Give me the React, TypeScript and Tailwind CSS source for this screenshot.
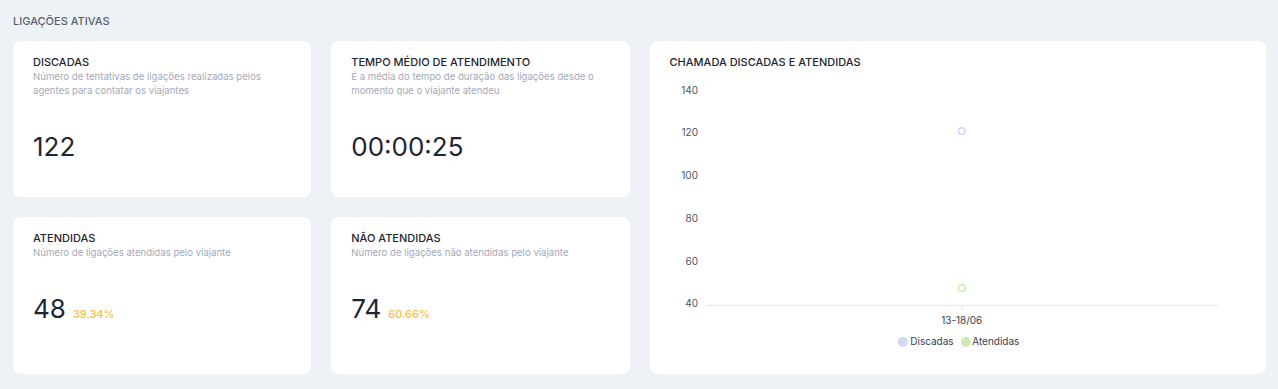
import React from 'react';

const FONT = { fontFamily: 'Inter, "Noto Sans", sans-serif' };

type StatProps = {
  title: string;
  description: string;
  value: string;
  percent?: string;
};

function StatCard({ title, description, value, percent }: StatProps) {
  return (
    <div className="bg-white rounded-lg px-5 pt-[13px]">
      <h4 className="text-[11px] leading-4 font-medium text-[#1e2433]">{title}</h4>
      <p className="text-[9.6px] leading-[14px] text-[#a3a9b8]">{description}</p>
      <div className="mt-8 flex items-baseline gap-[7px]">
        <span className="text-[26px] leading-[34px] text-[#1e2433]">{value}</span>
        {percent && <span className="text-[11px] font-medium text-[#f8bd45]">{percent}</span>}
      </div>
    </div>
  );
}

function Chart() {
  const ticks = [140, 120, 100, 80, 60, 40];
  const y = (v: number) => 234 - (v - 40) * 2.14;
  return (
    <svg className="w-full h-[290px]" viewBox="0 0 617 290" style={FONT}>
      {ticks.map((t) => (
        <text key={t} x={48} y={y(t) + 3.5} textAnchor="end" fontSize="10" fill="#4b5563">
          {t}
        </text>
      ))}
      <line x1={56} x2={568} y1={235.5} y2={235.5} stroke="#e5e7eb" strokeWidth="1" />
      <line x1={312.5} x2={312.5} y1={236} y2={241} stroke="#e5e7eb" strokeWidth="1" />
      <text x={312} y={254.5} textAnchor="middle" fontSize="10" fill="#374151">
        13-18/06
      </text>
      <circle cx={312} cy={61} r={3.3} fill="white" stroke="#cfd4f2" strokeWidth="1.5" />
      <circle cx={312} cy={218} r={3.3} fill="white" stroke="#cbe8ae" strokeWidth="1.5" />
      <circle cx={253} cy={272} r={5} fill="#d3d8f4" />
      <text x={260.5} y={275.5} fontSize="10" fill="#374151">
        Discadas
      </text>
      <circle cx={316} cy={272} r={5} fill="#cfeab3" />
      <text x={322.5} y={275.5} fontSize="10" fill="#374151">
        Atendidas
      </text>
    </svg>
  );
}

export default function App() {
  return (
    <div className="min-h-[389px] bg-[#eef2f7] px-3 pt-[13px]" style={FONT}>
      <h3 className="text-[11px] leading-4 font-medium text-[#5a6070] uppercase mb-3 pl-px">
        Ligações Ativas
      </h3>
      <div className="grid grid-cols-4 grid-rows-[156px_157px] gap-5 pl-px">
        <StatCard
          title="DISCADAS"
          description="Número de tentativas de ligações realizadas pelos agentes para contatar os viajantes"
          value="122"
        />
        <StatCard
          title="TEMPO MÉDIO DE ATENDIMENTO"
          description="É a média do tempo de duração das ligações desde o momento que o viajante atendeu"
          value="00:00:25"
        />
        <div className="col-span-2 row-span-2 bg-white rounded-lg pt-[13px]">
          <h4 className="px-5 text-[11px] leading-4 font-medium text-[#1e2433]">
            CHAMADA DISCADAS E ATENDIDAS
          </h4>
          <Chart />
        </div>
        <StatCard
          title="ATENDIDAS"
          description="Número de ligações atendidas pelo viajante"
          value="48"
          percent="39.34%"
        />
        <StatCard
          title="NÃO ATENDIDAS"
          description="Número de ligações não atendidas pelo viajante"
          value="74"
          percent="60.66%"
        />
      </div>
    </div>
  );
}
